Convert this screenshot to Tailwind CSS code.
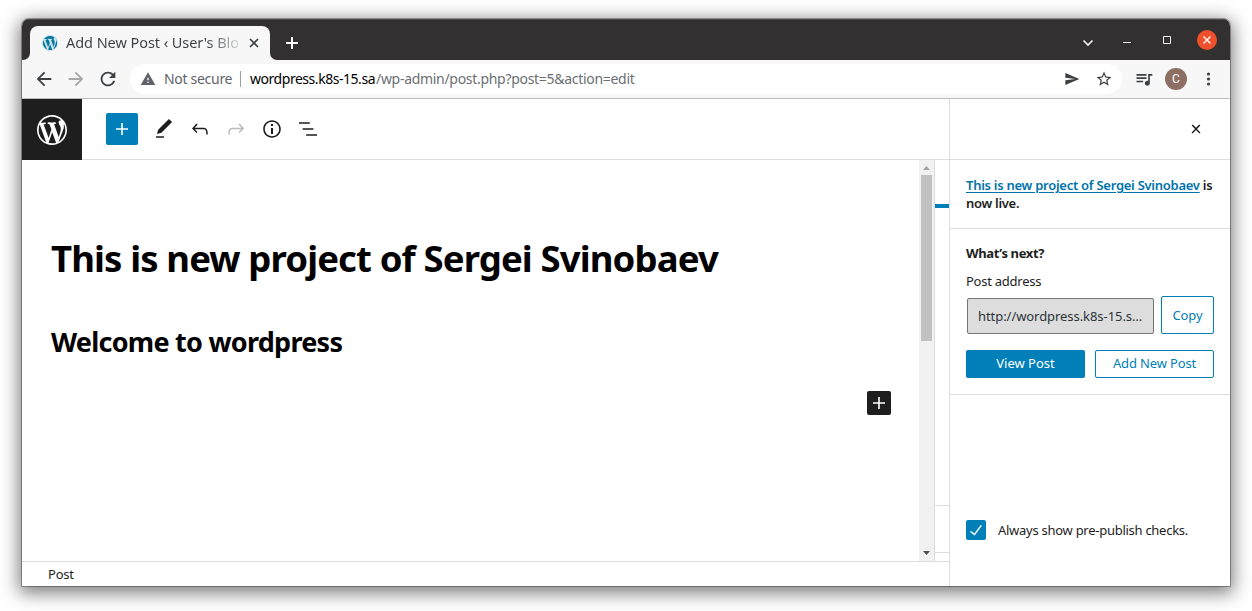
<!DOCTYPE html>
<html lang="en">
<head>
<meta charset="utf-8">
<title>Add New Post</title>
<script src="https://cdn.jsdelivr.net/npm/@tailwindcss/browser@4"></script>
</head>
<body class="w-[1252px] h-[611px] overflow-hidden bg-white font-['Noto_Sans',sans-serif] text-[#1e1e1e] pt-[19px] pl-[22px]">
<svg class="hidden">
  <symbol id="wp" viewBox="0 0 20 20"><path d="M20 10c0-5.51-4.49-10-10-10C4.48 0 0 4.49 0 10c0 5.52 4.48 10 10 10 5.51 0 10-4.48 10-10zM7.78 15.37L4.37 6.22c.55-.02 1.17-.08 1.17-.08.5-.06.44-1.13-.06-1.11 0 0-1.45.11-2.37.11-.18 0-.37 0-.58-.01C4.12 2.69 6.87 1.11 10 1.11c2.33 0 4.45.87 6.05 2.34-.68-.11-1.65.39-1.65 1.58 0 .74.45 1.36.9 2.1.35.61.55 1.36.55 2.46 0 1.49-1.4 5-1.4 5l-3.03-8.37c.54-.02.82-.17.82-.17.5-.05.44-1.25-.06-1.22 0 0-1.44.12-2.38.12-.87 0-2.33-.12-2.33-.12-.5-.03-.56 1.2-.06 1.22l.92.08 1.26 3.41zM17.41 10c.24-.64.74-1.87.43-4.25.7 1.29 1.05 2.71 1.05 4.25 0 3.29-1.73 6.24-4.4 7.78.97-2.59 1.94-5.2 2.92-7.78zM6.1 18.09C3.12 16.65 1.11 13.53 1.11 10c0-1.3.23-2.48.72-3.59C3.25 10.3 4.67 14.2 6.1 18.09zm4.03-6.63l2.58 6.98c-.86.29-1.76.45-2.71.45-.79 0-1.57-.11-2.29-.33.81-2.38 1.62-4.74 2.42-7.1z"/></symbol>
  <symbol id="wpmark" viewBox="0 0 20 20"><path d="M17.41 10c.24-.64.74-1.87.43-4.25.7 1.29 1.05 2.71 1.05 4.25 0 3.29-1.73 6.24-4.4 7.78.97-2.59 1.94-5.2 2.92-7.78zM6.1 18.09C3.12 16.65 1.11 13.53 1.11 10c0-1.3.23-2.48.72-3.59C3.25 10.3 4.67 14.2 6.1 18.09zm4.03-6.63l2.58 6.98c-.86.29-1.76.45-2.71.45-.79 0-1.57-.11-2.29-.33.81-2.38 1.62-4.74 2.42-7.1zM7.78 15.37L4.37 6.22c.55-.02 1.17-.08 1.17-.08.5-.06.44-1.13-.06-1.11 0 0-1.45.11-2.37.11-.18 0-.37 0-.58-.01C4.12 2.69 6.87 1.11 10 1.11c2.33 0 4.45.87 6.05 2.34-.68-.11-1.65.39-1.65 1.58 0 .74.45 1.36.9 2.1.35.61.55 1.36.55 2.46 0 1.49-1.4 5-1.4 5l-3.03-8.37c.54-.02.82-.17.82-.17.5-.05.44-1.25-.06-1.22 0 0-1.44.12-2.38.12-.87 0-2.33-.12-2.33-.12-.5-.03-.56 1.2-.06 1.22l.92.08 1.26 3.41z"/></symbol>
  <symbol id="plus" viewBox="0 0 24 24"><path d="M18 11.2h-5.2V6h-1.6v5.2H6v1.6h5.2V18h1.6v-5.2H18z"/></symbol>
</svg>
<div class="w-[1208px] h-[567px] flex flex-col rounded-t-[7px] overflow-hidden bg-white shadow-[0_0_0_1px_rgba(0,0,0,0.3),0_4px_18px_3px_rgba(0,0,0,0.52)]">

  <!-- Tab strip -->
  <div class="h-[41px] shrink-0 bg-[#323031] border-t border-[#4a4849] flex items-end">
    <div class="w-2 h-[34px] bg-[#f7f7f7]"><div class="size-full bg-[#323031] rounded-br-[7px]"></div></div>
    <div class="w-[240px] h-[34px] bg-[#f7f7f7] rounded-t-[8px] flex items-center pl-3 pr-[6px]">
      <svg class="size-4 mr-2 fill-[#00749c]" viewBox="0 0 20 20"><circle cx="10" cy="10" r="10" fill="#c5dfe8"/><use href="#wpmark"/></svg>
      <span class="w-[176px] -mt-0.5 overflow-hidden whitespace-nowrap text-[14.5px] tracking-[-0.06px] leading-5 text-transparent bg-clip-text bg-linear-to-r from-[#3c4043] from-80% to-[#3c4043]/10">Add New Post ‹ User's Blo</span>
      <svg class="ml-auto size-5 fill-none stroke-[#3c4043] stroke-[1.7]" viewBox="0 0 20 20"><path d="M6 6l8 8M14 6l-8 8"/></svg>
    </div>
    <div class="w-2 h-[34px] bg-[#f7f7f7]"><div class="size-full bg-[#323031] rounded-bl-[7px]"></div></div>
    <svg class="w-7 h-[34px] fill-none stroke-white stroke-2" viewBox="0 0 28 34"><path d="M14 11v12M8 17h12"/></svg>
    <div class="ml-auto flex h-[40px] items-center">
      <svg class="w-[142px] h-10 fill-none stroke-[#f2f2f2]" viewBox="0 0 142 40"><path stroke-width="1.700" d="M15.5 20.5l4.5 4.5 4.500-4.500"/><path d="M55 22.5h8" stroke-width="1"/><path d="M95.500 16.500h7v7h-7z" stroke-width="1"/></svg>
      <svg class="-ml-[13px] mr-[13px] size-5 rounded-full bg-[#f0502c] fill-none stroke-white stroke-[1.4]" viewBox="0 0 20 20"><path d="M6.500 6.500l7 7M13.500 6.500l-7 7"/></svg>
    </div>
  </div>

  <!-- Address bar -->
  <div class="h-[39px] shrink-0 bg-[#f7f7f7] border-b border-[#bdbdbd] flex items-center pl-[11px]">
    <svg class="size-[22px] fill-[#3c4043] mr-[10px]" viewBox="0 0 24 24"><path d="M20 11H7.830l5.590-5.590L12 4l-8 8 8 8 1.410-1.410L7.830 13H20z"/></svg>
    <svg class="size-[22px] fill-[#a6a7a8] mr-[10px]" viewBox="0 0 24 24"><path d="M4 11h12.170l-5.590-5.590L12 4l8 8-8 8-1.410-1.410L16.170 13H4z"/></svg>
    <svg class="size-[22px] fill-[#3c4043] mr-[11px]" viewBox="0 0 24 24"><path d="M17.650 6.350C16.200 4.900 14.210 4 12 4c-4.420 0-7.990 3.580-7.990 8s3.570 8 7.990 8c3.730 0 6.840-2.550 7.730-6h-2.080c-.82 2.330-3.040 4-5.650 4-3.310 0-6-2.690-6-6s2.690-6 6-6c1.660 0 3.140.69 4.220 1.780L13 11h7V4l-2.350 2.350z"/></svg>
    <div class="w-[992px] h-[30px] rounded-full bg-white flex items-center text-[14px] whitespace-nowrap">
      <svg class="size-4 fill-[#5f6368] ml-[10px] mr-2" viewBox="0 0 24 24"><path d="M1 21h22L12 2 1 21zm12-3h-2v-2h2v2zm0-4h-2v-4h2v4z"/></svg>
      <span class="w-[69px] -mt-0.5 text-[#5f6368] tracking-[-0.3px]">Not secure</span>
      <span class="w-px h-4 ml-[7px] mr-[9px] bg-[#9aa0a6]"></span>
      <span class="w-[126px] -mt-0.5 text-black tracking-[-0.46px]">wordpress.k8s-15.sa</span>
      <span class="-mt-0.5 text-[#6b6f73] tracking-[-0.3px]">/wp-admin/post.php?post=5&amp;action=edit</span>
      <svg class="size-4 fill-[#3c4043] ml-auto mr-[15px]" viewBox="0 0 24 24"><path d="M2.010 21L23 12 2.010 3 2 10l15 2-15 2z"/></svg>
      <svg class="size-[18px] fill-[#3c4043] mr-[9px]" viewBox="0 0 24 24"><path d="M22 9.240l-7.190-.62L12 2 9.190 8.630 2 9.240l5.460 4.730L5.820 21 12 17.270 18.180 21l-1.630-7.030L22 9.240zM12 15.400l-3.760 2.270 1-4.280-3.320-2.880 4.380-.38L12 6.100l1.710 4.040 4.380.38-3.320 2.880 1 4.280L12 15.400z"/></svg>
    </div>
    <svg class="size-5 fill-[#3c4043] ml-[12px]" viewBox="0 0 24 24"><path d="M15 6H3v2h12V6zm0 4H3v2h12v-2zM3 16h8v-2H3v2zM17 6v8.180c-.31-.11-.65-.18-1-.18-1.660 0-3 1.340-3 3s1.340 3 3 3 3-1.340 3-3V8h3V6h-5z"/></svg>
    <div class="size-[22px] ml-[11px] rounded-full bg-[#8d6e63] text-white text-[12px] font-['Roboto',sans-serif] flex items-center justify-center">C</div>
    <svg class="w-1.5 h-4 fill-[#3c4043] ml-[18px]" viewBox="0 0 6 16"><circle cx="3.500" cy="3" r="1.600"/><circle cx="3.500" cy="8" r="1.600"/><circle cx="3.500" cy="13" r="1.600"/></svg>
  </div>

  <div class="flex-1 flex min-h-0">
    <!-- Editor -->
    <main class="w-[928px] border-r border-[#dddddd] flex flex-col">
      <header class="h-[61px] shrink-0 flex">
        <div class="w-[60px] h-[61px] bg-[#1e1e1e] flex items-center justify-center"><svg class="size-[30px] fill-white"><use href="#wp"/></svg></div>
        <div class="flex-1 border-b border-[#dddddd] flex items-center pl-6">
          <div class="size-8 rounded-[2px] bg-[#007fb8] flex items-center justify-center mr-[14px]"><svg class="size-6 fill-white"><use href="#plus"/></svg></div>
          <div class="flex gap-3">
            <svg class="size-6 fill-[#1e1e1e]" viewBox="0 0 24 24"><path d="M20.100 5.100L16.900 2 6.200 12.700l-1.300 4.400 4.500-1.300L20.100 5.100zM4 20.800h8v-1.500H4v1.500z"/></svg>
            <svg class="size-6 fill-[#1e1e1e]" viewBox="0 0 24 24"><path d="M18.300 11.700c-.6-.6-1.400-.9-2.300-.9H6.700l2.900-3.300-1.100-1-4.500 5L8.500 16l1-1-2.700-2.700H16c.5 0 .9.2 1.300.5 1 1 1 3.400 1 4.500v.3h1.500v-.2c0-1.500 0-4.300-1.500-5.700z"/></svg>
            <svg class="size-6 fill-[#bbbbbb]" viewBox="0 0 24 24"><path d="M15.600 6.500l-1.100 1 2.900 3.300H8c-.9 0-1.700.3-2.300.9-1.400 1.500-1.400 4.200-1.400 5.600v.2h1.500v-.3c0-1.100 0-3.500 1-4.500.3-.3.7-.5 1.300-.5h9.200L14.500 15l1.100 1.100 4.600-4.600-4.600-5z"/></svg>
            <svg class="size-6 fill-[#1e1e1e]" viewBox="0 0 24 24"><path d="M12 3.200c-4.800 0-8.800 3.900-8.800 8.800 0 4.800 3.900 8.800 8.800 8.800 4.800 0 8.800-3.900 8.800-8.800 0-4.800-4-8.800-8.800-8.800zm0 16c-4 0-7.200-3.300-7.200-7.200C4.800 8 8 4.800 12 4.800s7.200 3.300 7.200 7.200c0 4-3.200 7.200-7.200 7.200zM11 17h2v-6h-2v6zm0-8h2V7h-2v2z"/></svg>
            <svg class="size-6 fill-[#1e1e1e]" viewBox="0 0 24 24"><path d="M13.800 5.200H3v1.500h10.800V5.200zm-3.600 12v1.500H21v-1.500H10.200zm7.200-6H6.600v1.500h10.800v-1.500z"/></svg>
          </div>
        </div>
      </header>
      <div class="flex-1 flex min-h-0">
        <div class="w-[897px] pl-[29px] pr-7 pt-[73px] text-black flex flex-col">
          <h1 class="text-[36.500px] leading-[50px] font-bold whitespace-nowrap tracking-[-0.87px]">This is new project of Sergei Svinobaev</h1>
          <h2 class="text-[27px] leading-[40px] mt-[39px] font-bold whitespace-nowrap tracking-[-0.74px]">Welcome to wordpress</h2>
          <div class="size-6 mt-[29px] ml-auto rounded-[2px] bg-[#1e1e1e]"><svg class="size-6 fill-white"><use href="#plus"/></svg></div>
        </div>
        <div class="w-[15px] bg-[#f1f1f1] flex flex-col items-center">
          <svg class="w-[15px] h-[15px] shrink-0 fill-[#a3a3a3]" viewBox="0 0 15 15"><path d="M4 10h7L7.500 6z"/></svg>
          <div class="w-[11px] h-[166px] bg-[#c1c1c1]"></div>
          <svg class="w-[15px] h-[15px] mt-auto shrink-0 fill-[#505050]" viewBox="0 0 15 15"><path d="M4 5h7L7.500 9z"/></svg>
        </div>
        <div class="flex-1 border-l border-[#dddddd] pt-11">
          <div class="h-1 bg-[#007fb8]"></div>
          <div class="mt-[297px] h-12 border-y border-[#dddddd]"></div>
        </div>
      </div>
      <footer class="h-[25px] shrink-0 border-t border-[#dddddd] pl-[26px] pt-0.5 flex items-center text-[13px]"><span class="tracking-[-0.2px]">Post</span></footer>
    </main>

    <!-- Publish panel -->
    <aside class="flex-1 flex flex-col text-[13px] leading-[18px] whitespace-nowrap">
      <div class="h-[61px] shrink-0 border-b border-[#dddddd] flex items-center justify-end pr-[22px]">
        <svg class="size-6 fill-[#1e1e1e]" viewBox="0 0 24 24"><path d="M13 11.900l3.300-3.400-1.100-1-3.200 3.300-3.200-3.300-1.100 1 3.300 3.400-3.500 3.600 1 1L12 13l3.500 3.500 1-1z"/></svg>
      </div>
      <div class="h-[69px] shrink-0 border-b border-[#dddddd] px-4 pt-4 font-semibold">
        <p><a class="text-[#0073aa] underline underline-offset-2 tracking-[-0.27px]">This is new project of Sergei Svinobaev</a><span class="tracking-[-0.2px]"> is</span></p>
        <p class="tracking-[-0.3px]">now live.</p>
      </div>
      <div class="h-[166px] shrink-0 border-b border-[#dddddd] px-4 pt-[15px]">
        <p class="font-bold tracking-[-0.35px]">What’s next?</p>
        <p class="mt-[10px] tracking-[-0.25px]">Post address</p>
        <div class="flex mt-[6px]">
          <div class="w-[187px] h-9 mt-0.5 ml-px rounded-[2px] border border-[#757575] bg-[#dddddd] text-[#2c3338] flex items-center pl-[10px] tracking-[-0.06px]">http://wordpress.k8s-15.s…</div>
          <div class="w-[53px] h-[38px] ml-[7px] rounded-[2px] border border-[#007fb8] text-[#007fb8] flex items-center justify-center tracking-[-0.1px]">Copy</div>
        </div>
        <div class="flex gap-[10px] mt-4">
          <div class="w-[119px] h-7 pb-0.5 rounded-[2px] bg-[#007fb8] text-white flex items-center justify-center">View Post</div>
          <div class="w-[119px] h-7 pb-0.5 rounded-[2px] border border-[#007fb8] text-[#007fb8] flex items-center justify-center tracking-[-0.15px]">Add New Post</div>
        </div>
      </div>
      <div class="flex items-center px-4 mt-[125px]">
        <div class="size-5 rounded-[2px] bg-[#007fb8] flex items-center justify-center mr-3"><svg class="size-[18px] fill-white stroke-white stroke-[0.6]" viewBox="0 0 24 24"><path d="M18.300 5.600L9.900 16.900l-4.600-3.400-.9 1.200 5.800 4.300 9.300-12.600z"/></svg></div>
        <span class="tracking-[-0.27px]">Always show pre-publish checks.</span>
      </div>
    </aside>
  </div>
</div>
</body>
</html>
